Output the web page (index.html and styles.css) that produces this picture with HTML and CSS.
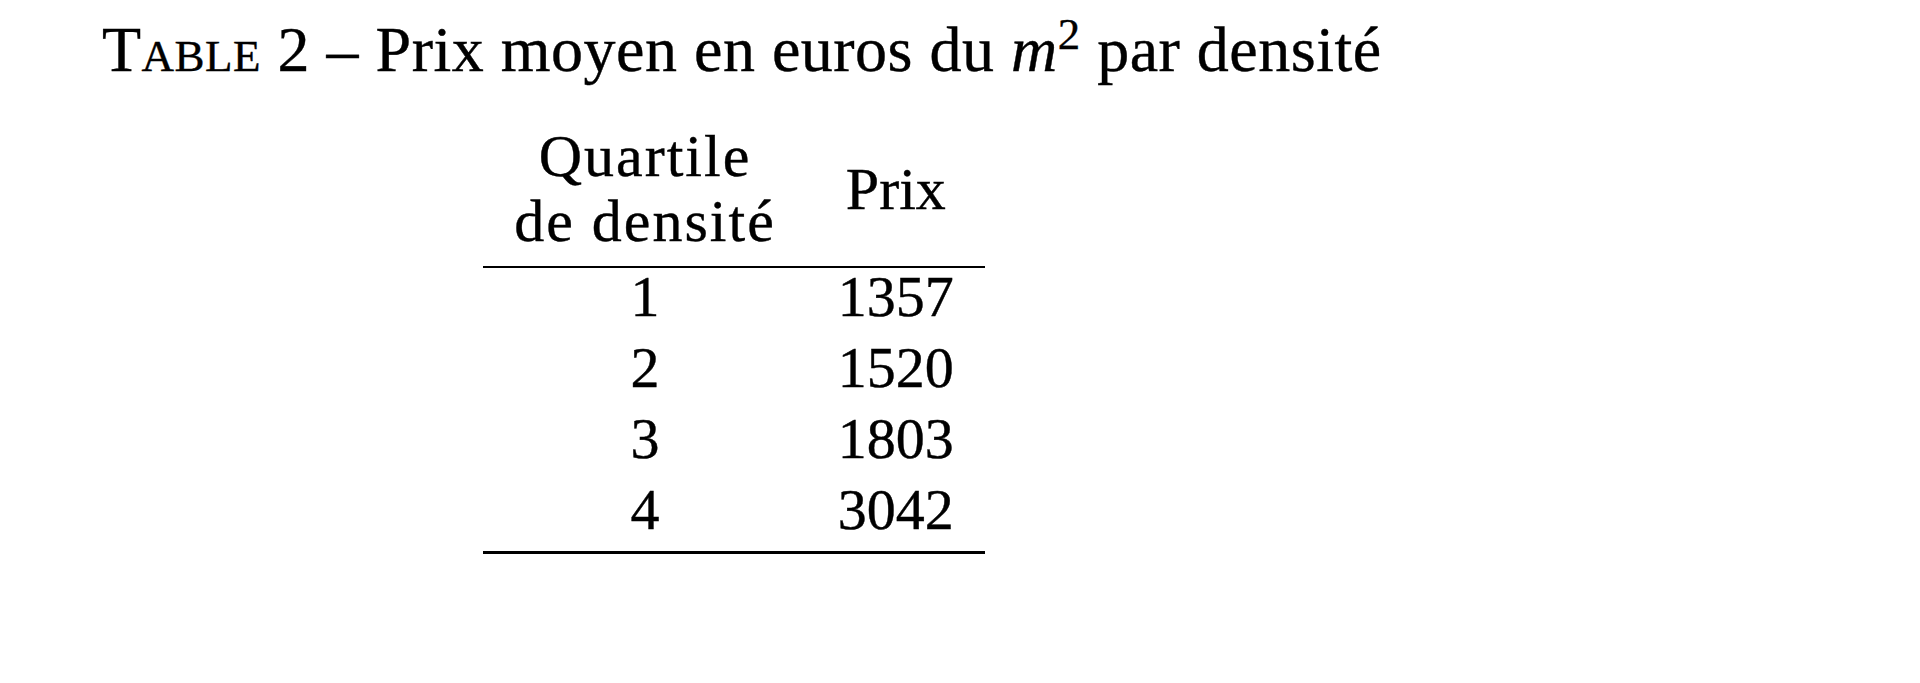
FILE: index.html
```html
<!DOCTYPE html>
<html lang="fr">
<head>
<meta charset="utf-8">
<title>Table 2</title>
<link rel="stylesheet" href="styles.css">
</head>
<body>
<div class="figure">
  <p class="caption"><span class="label">Table 2</span> – Prix moyen en euros du <i>m</i><sup>2</sup> par densité</p>
  <table class="data">
    <thead>
      <tr>
        <th class="col-q">Quartile<br>de densité</th>
        <th class="col-p">Prix</th>
      </tr>
    </thead>
    <tbody>
      <tr><td>1</td><td>1357</td></tr>
      <tr><td>2</td><td>1520</td></tr>
      <tr><td>3</td><td>1803</td></tr>
      <tr class="last"><td>4</td><td>3042</td></tr>
    </tbody>
  </table>
</div>
</body>
</html>
```

FILE: styles.css
```css
html, body {
  margin: 0;
  padding: 0;
  background: #ffffff;
}

body {
  font-family: "Liberation Serif", "Times New Roman", serif;
  color: #000000;
  width: 1920px;
  height: 683px;
  overflow: hidden;
  -webkit-text-stroke: 0.4px #000000;
}

.figure {
  margin-left: 102px;
  width: 1264px;
  padding-top: 12px;
}

.caption {
  margin: 0 0 36px 0;
  font-size: 64px;
  line-height: 76px;
  letter-spacing: 0.5px;
  white-space: nowrap;
}

.caption .label {
  font-variant: small-caps;
}

.caption i {
  font-style: italic;
}

.caption sup {
  font-size: 0.7em;
  line-height: 0;
  vertical-align: 0.5em;
}

.data {
  margin: 0 auto;
  border-collapse: separate;
  border-spacing: 0;
}

.data th {
  font-weight: normal;
  font-size: 60px;
  line-height: 65px;
  padding: 0 31px 12px 31px;
  border-bottom: 2px solid #000;
  text-align: center;
  vertical-align: middle;
  white-space: nowrap;
}

.data th.col-q {
  letter-spacing: 2px;
}

.data th.col-p {
  width: 115px;
}

.data td {
  font-size: 58px;
  line-height: 57px;
  padding: 0 31px 14px 31px;
  text-align: center;
  white-space: nowrap;
}

.data tr.last td {
  padding-bottom: 13px;
  border-bottom: 3px solid #000;
}
```
